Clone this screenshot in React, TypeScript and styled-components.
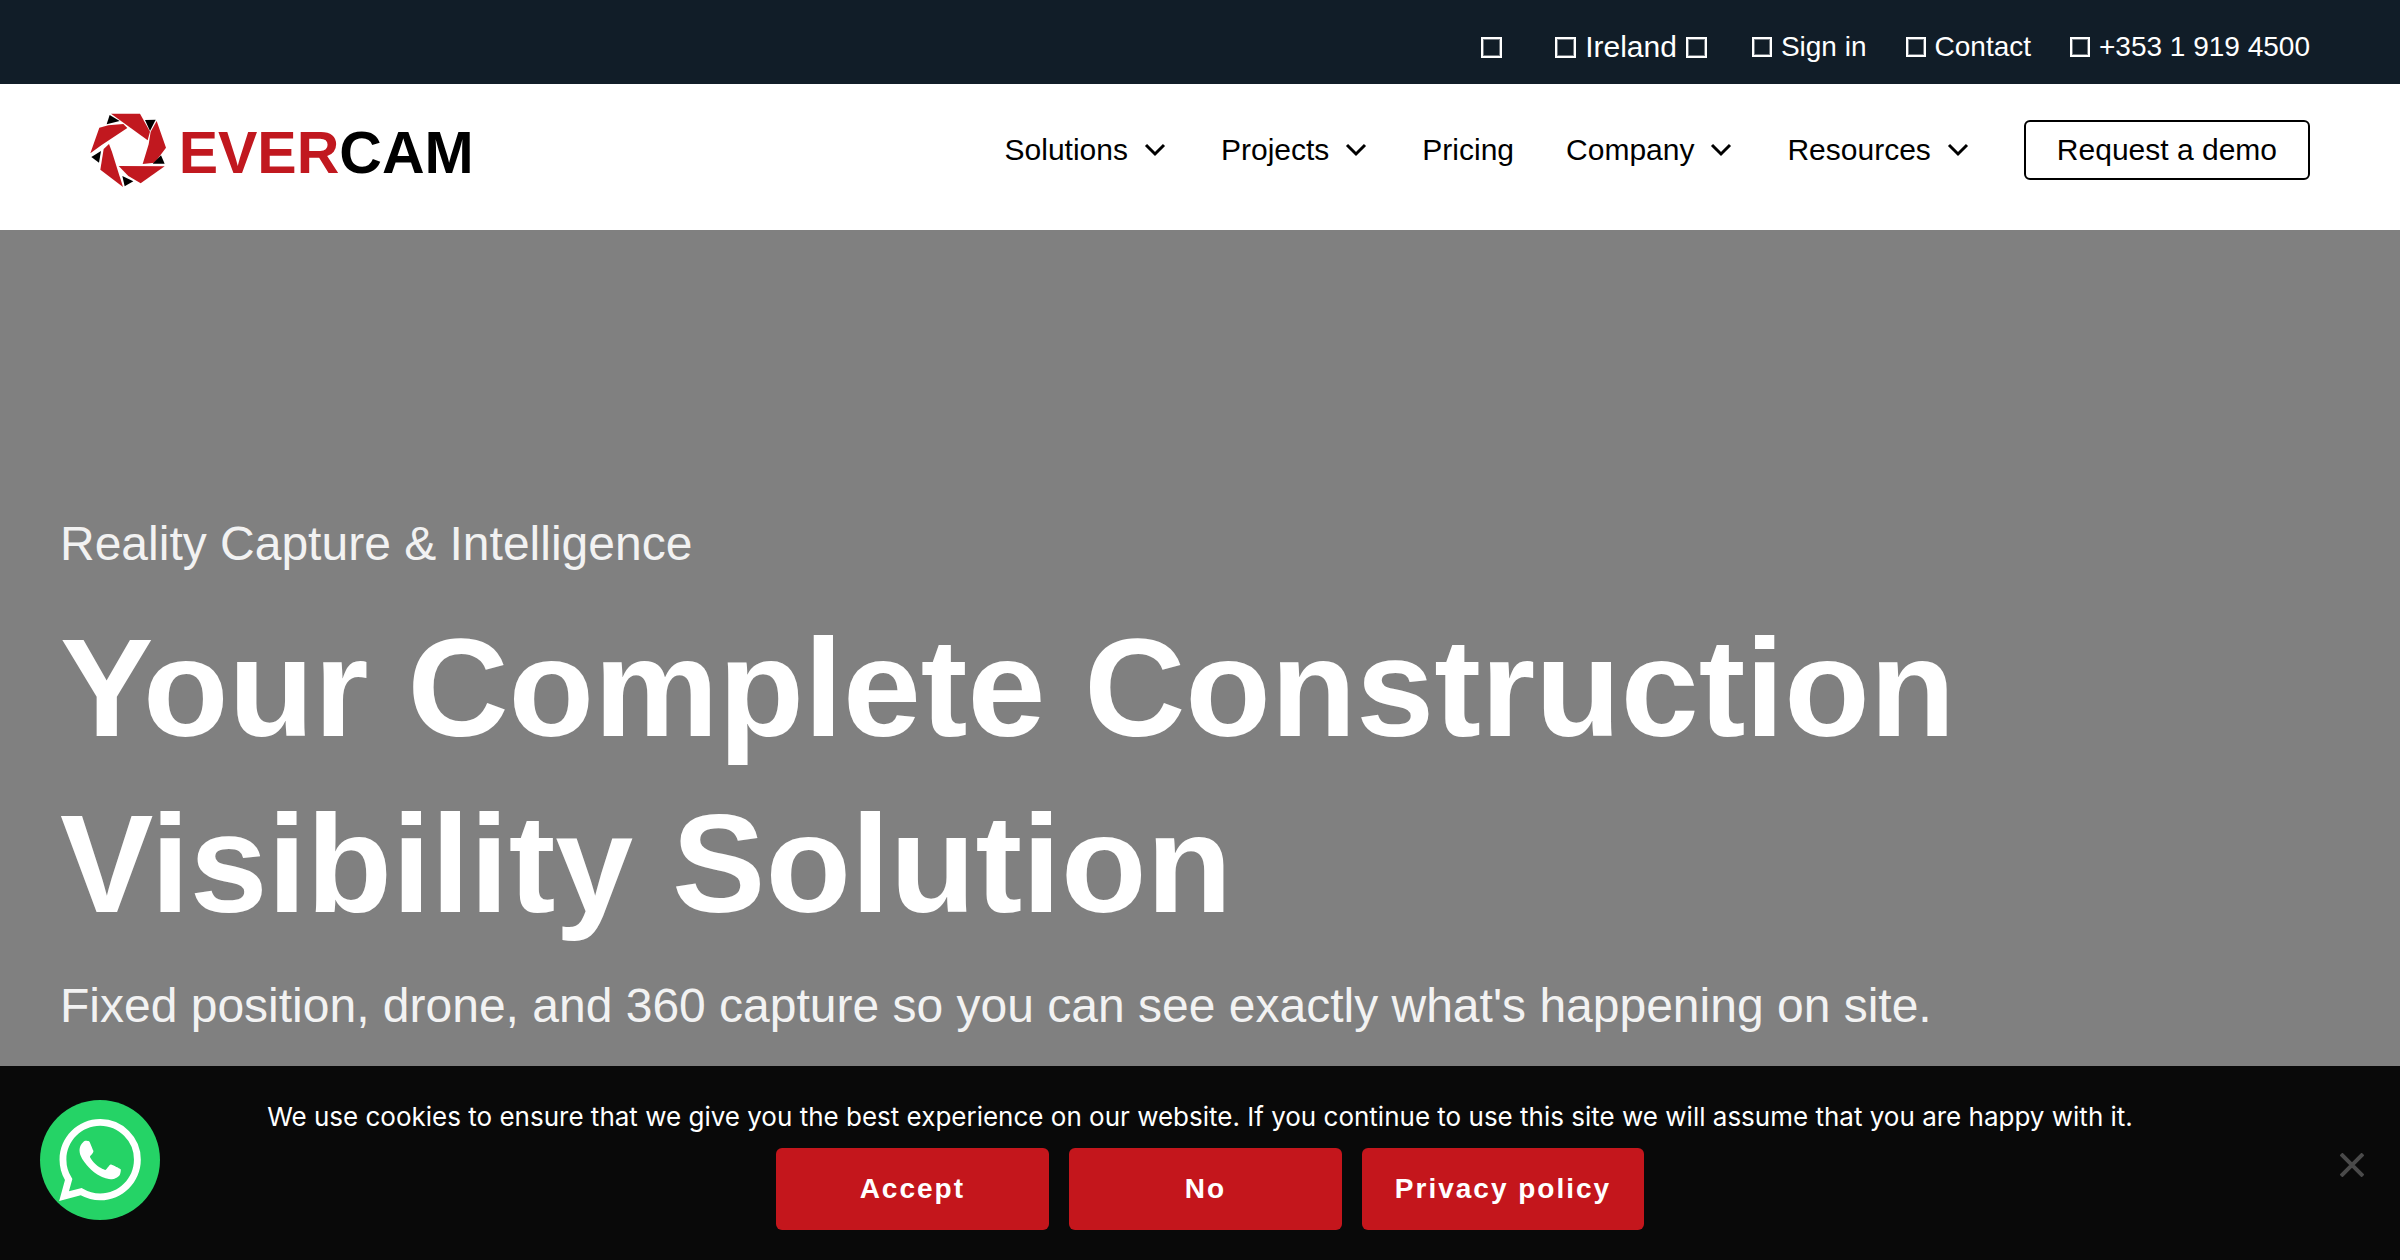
import React from "react";
import styled, { createGlobalStyle } from "styled-components";
import { SiWhatsapp } from "react-icons/si";

const GlobalStyle = createGlobalStyle`
  *, *::before, *::after { box-sizing: border-box; }
  body {
    margin: 0;
    background: #808080;
    font-family: "Liberation Sans", Arial, Helvetica, sans-serif;
  }
  a { color: inherit; text-decoration: none; }
  button { font-family: inherit; cursor: pointer; }
`;

const Page = styled.div`
  min-height: 100vh;
  display: flex;
  flex-direction: column;
`;

const TopBar = styled.div`
  height: 84px;
  padding: 10px 90px 0;
  display: flex;
  align-items: center;
  justify-content: flex-end;
  gap: 39px;
  background: #111d28;
  color: #fff;
  font-size: 28px;
  line-height: 72px;
`;

const TopLink = styled.a`
  display: flex;
  align-items: center;
  gap: 9px;
`;

const SearchButton = styled.button`
  display: flex;
  padding: 0;
  margin-right: 14px;
  border: 0;
  background: none;
  color: inherit;
`;

const CountryButton = styled.button`
  display: flex;
  align-items: center;
  gap: 9px;
  padding: 0;
  margin-right: 6px;
  border: 0;
  background: none;
  color: inherit;
  font-size: 30px;
`;

const Glyph = styled.span<{ $size?: number }>`
  width: ${(p) => p.$size ?? 20}px;
  height: ${(p) => p.$size ?? 20}px;
  border: 2px solid #fff;
  box-shadow: inset 0 0 0 1px rgba(255, 255, 255, 0.4);
`;

const Header = styled.header`
  height: 146px;
  padding: 29px 90px 0;
  display: flex;
  align-items: flex-start;
  justify-content: space-between;
  background: #fff;
  color: #000;
`;

const LogoLink = styled.a`
  display: block;
  line-height: 0;
`;

const Nav = styled.nav`
  display: flex;
  align-items: center;
  gap: 52px;
  padding-top: 7px;
  font-size: 30px;
  line-height: 56px;
`;

const NavItem = styled.a`
  display: flex;
  align-items: center;
  gap: 15px;
`;

const DemoLink = styled.a`
  padding: 0 31px;
  border: 2px solid #000;
  border-radius: 6px;
`;

const Hero = styled.main`
  padding: 281px 60px 240px;
  flex: 1;
  background: #808080;
`;

const HeroText = styled.p`
  margin: 0;
  font-size: 48px;
  line-height: 66px;
  color: #f2f2f2;
`;

const HeroTitle = styled.h1`
  max-width: 2100px;
  margin: 23px 0 21px;
  font-size: 140px;
  line-height: 176px;
  font-weight: 700;
  color: #fff;
`;

const CookieBar = styled.section`
  position: fixed;
  left: 0;
  right: 0;
  bottom: 0;
  padding: 31px 60px 30px;
  display: flex;
  flex-direction: column;
  align-items: center;
  gap: 11px;
  background: #090909;
  color: #fff;
`;

const CookieText = styled.p`
  margin: 0;
  font-family: Inter, "Liberation Sans", sans-serif;
  font-size: 26px;
  line-height: 40px;
`;

const CookieActions = styled.div`
  display: flex;
  gap: 20px;
  padding-left: 20px;
`;

const CookieButton = styled.button`
  min-width: 273px;
  height: 82px;
  padding: 0 33px;
  border: 0;
  border-radius: 6px;
  background: #c4161c;
  color: #fff;
  font-size: 28px;
  font-weight: 700;
  letter-spacing: 2px;
`;

const CloseButton = styled.button`
  position: absolute;
  right: 36px;
  top: 87px;
  padding: 0;
  border: 0;
  background: none;
  line-height: 0;
`;

const ChatLink = styled.a`
  position: fixed;
  left: 40px;
  bottom: 40px;
  width: 120px;
  height: 120px;
  display: flex;
  align-items: center;
  justify-content: center;
  border-radius: 50%;
  background: #25d366;
  color: #fff;
`;

const Chevron = () => (
  <svg width="26" height="26" viewBox="0 0 26 26" fill="none" stroke="#000" strokeWidth="3" aria-hidden="true">
    <path d="M3 8l9 9 9-9" />
  </svg>
);

const Logo = () => (
  <svg width="390" height="76" viewBox="90 70 1170 228" role="img" aria-label="Evercam">
    <g fill="#c1181f">
      <path d="M153 72H240L270 126 263 152Z" />
      <path d="M290 94L318 174 284 219 248 223 266 164 272 126Z" />
      <path d="M314 230L242 281 205 259 176 229Z" />
      <path d="M189 292L121 240 131 178 147 163 155 184Z" />
      <path d="M91 191L118 114 145 107 190 103 202 115 125 166Z" />
    </g>
    <g fill="#000">
      <path d="M149 76L179 94 140 104Z" />
      <path d="M255 91L287 90 270 124Z" />
      <path d="M303 197L314 222H278Z" />
      <path d="M187 259L220 275 194 290Z" />
      <path d="M123 184L117 219 94 202Z" />
    </g>
    <text x="356" y="249" fontFamily="Liberation Sans, Arial, sans-serif" fontWeight="700" fontSize="177" fill="#c1181f">
      EVER<tspan fill="#000">CAM</tspan>
    </text>
  </svg>
);

const navItems = [
  { label: "Solutions", menu: true },
  { label: "Projects", menu: true },
  { label: "Pricing", menu: false },
  { label: "Company", menu: true },
  { label: "Resources", menu: true },
];

const contactLinks = ["Sign in", "Contact", "+353 1 919 4500"];

export default function App() {
  return (
    <Page>
      <GlobalStyle />
      <TopBar>
        <SearchButton aria-label="Search">
          <Glyph $size={21} />
        </SearchButton>
        <CountryButton>
          <Glyph $size={21} />
          Ireland
          <Glyph $size={21} />
        </CountryButton>
        {contactLinks.map((label) => (
          <TopLink href="#" key={label}>
            <Glyph />
            {label}
          </TopLink>
        ))}
      </TopBar>
      <Header>
        <LogoLink href="#">
          <Logo />
        </LogoLink>
        <Nav>
          {navItems.map(({ label, menu }) => (
            <NavItem href="#" key={label}>
              {label}
              {menu && <Chevron />}
            </NavItem>
          ))}
          <DemoLink href="#">Request a demo</DemoLink>
        </Nav>
      </Header>
      <Hero>
        <HeroText>Reality Capture &amp; Intelligence</HeroText>
        <HeroTitle>Your Complete Construction Visibility Solution</HeroTitle>
        <HeroText>Fixed position, drone, and 360 capture so you can see exactly what's happening on site.</HeroText>
      </Hero>
      <CookieBar aria-label="Cookie notice">
        <CookieText>
          We use cookies to ensure that we give you the best experience on our website. If you continue to use this site
          we will assume that you are happy with it.
        </CookieText>
        <CookieActions>
          <CookieButton>Accept</CookieButton>
          <CookieButton>No</CookieButton>
          <CookieButton>Privacy policy</CookieButton>
        </CookieActions>
        <CloseButton aria-label="Close">
          <svg width="24" height="24" viewBox="0 0 24 24" fill="none" stroke="#4a4a4a" strokeWidth="4">
            <path d="M1 1l22 22M23 1L1 23" />
          </svg>
        </CloseButton>
      </CookieBar>
      <ChatLink href="#" aria-label="Chat on WhatsApp">
        <SiWhatsapp size={82} />
      </ChatLink>
    </Page>
  );
}
